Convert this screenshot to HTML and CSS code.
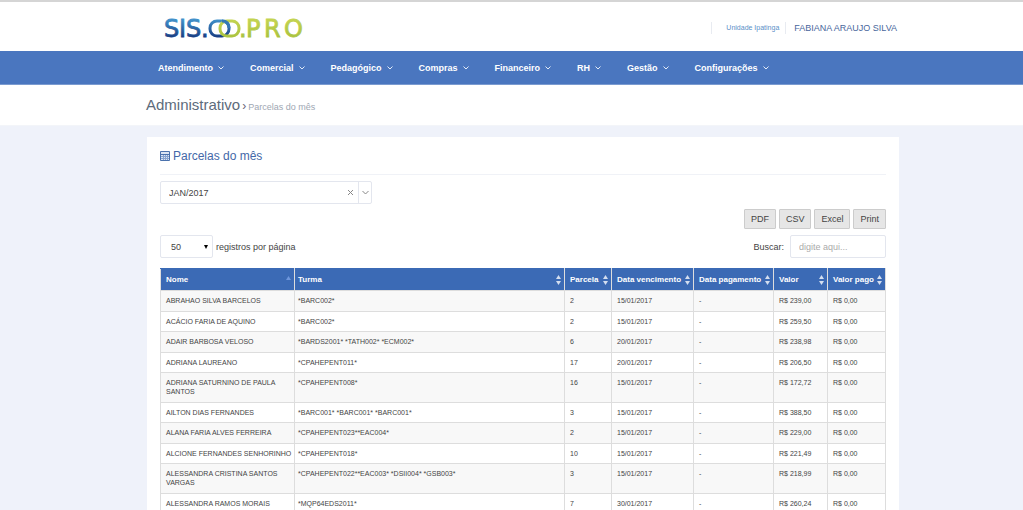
FILE: index.html
```html
<!DOCTYPE html>
<html lang="pt-BR">
<head>
<meta charset="utf-8">
<title>Parcelas do mês</title>
<link rel="stylesheet" href="styles.css">
</head>
<body>
<header class="top wrap">
  <svg class="logo" width="142" height="24" viewBox="0 0 142 24" role="img" aria-label="SIS.OO.PRO">
    <defs>
      <linearGradient id="blue" gradientUnits="userSpaceOnUse" x1="0" y1="3" x2="0" y2="21"><stop offset="0" stop-color="#3f8fc9"/><stop offset="1" stop-color="#173a80"/></linearGradient>
      <linearGradient id="green" gradientUnits="userSpaceOnUse" x1="0" y1="3" x2="0" y2="21"><stop offset="0" stop-color="#c3d350"/><stop offset="1" stop-color="#a9c23e"/></linearGradient>
    </defs>
    <g class="logo-text" fill="url(#blue)" stroke="url(#blue)"><text x="0" y="20">S</text><text x="15" y="20">I</text><text x="22" y="20">S</text><text x="37" y="20">.</text></g>
    <rect x="46" y="4" width="19" height="15" rx="7" fill="none" stroke="url(#blue)" stroke-width="3"/>
    <rect x="56" y="4" width="19" height="15" rx="7" fill="none" stroke="url(#green)" stroke-width="3"/>
    <path d="M58 4Q65 4 65 11" fill="none" stroke="#3478b5" stroke-width="3"/>
    <g class="logo-text" fill="url(#green)" stroke="url(#green)"><text x="75" y="20">.</text><text x="82" y="20">P</text><text x="100" y="20">R</text><text x="120" y="20">O</text></g>
  </svg>
  <div class="user"><a class="unit" href="#">Unidade Ipatinga</a><a class="name" href="#">FABIANA ARAUJO SILVA</a></div>
</header>
<nav class="nav wrap">
  <a href="#">Atendimento<svg class="chev" viewBox="0 0 6 4"><path d="M.5.5 3 3 5.500.5"/></svg></a>
  <a href="#">Comercial<svg class="chev" viewBox="0 0 6 4"><path d="M.5.5 3 3 5.500.5"/></svg></a>
  <a href="#">Pedagógico<svg class="chev" viewBox="0 0 6 4"><path d="M.5.5 3 3 5.500.5"/></svg></a>
  <a href="#">Compras<svg class="chev" viewBox="0 0 6 4"><path d="M.5.5 3 3 5.500.5"/></svg></a>
  <a href="#">Financeiro<svg class="chev" viewBox="0 0 6 4"><path d="M.5.5 3 3 5.500.5"/></svg></a>
  <a href="#">RH<svg class="chev" viewBox="0 0 6 4"><path d="M.5.5 3 3 5.500.5"/></svg></a>
  <a href="#">Gestão<svg class="chev" viewBox="0 0 6 4"><path d="M.5.5 3 3 5.500.5"/></svg></a>
  <a href="#">Configurações<svg class="chev" viewBox="0 0 6 4"><path d="M.5.5 3 3 5.500.5"/></svg></a>
</nav>
<div class="crumbs wrap"><h1>Administrativo</h1><span class="sep">›</span><small>Parcelas do mês</small></div>
<main class="wrap content">
  <section class="panel">
    <h2><svg width="10" height="10" viewBox="0 0 10 10"><path d="M.5.5h9v9h-9z" fill="#dbe5f4" stroke="#4b72ad"/><path d="M1 3.500h8" stroke="#4b72ad"/><path d="M1 5.500h8M1 7.500h8M3.500 4v5M5.500 4v5M7.500 4v5" stroke="#86a3d0"/></svg>Parcelas do mês</h2>
    <div class="combo">
      <input type="text" value="JAN/2017" aria-label="Mês">
      <button type="button" aria-label="Limpar"><svg width="7" height="7" viewBox="0 0 7 7"><path d="M1 1l5 5M6 1 1 6"/></svg></button>
      <button type="button" class="open" aria-label="Abrir"><svg width="7" height="5" viewBox="0 0 7 5"><path d="M.5 1l3 3 3-3"/></svg></button>
    </div>
    <div class="exports"><button type="button">PDF</button><button type="button">CSV</button><button type="button">Excel</button><button type="button">Print</button></div>
    <div class="tools">
      <label><span class="pick"><select><option>50</option></select><svg width="4" height="4" viewBox="0 0 4 4"><path d="M0 0h4L2 4z"/></svg></span>registros por página</label>
      <label class="search">Buscar:<input type="text" placeholder="digite aqui..."></label>
    </div>
    <table>
      <colgroup><col class="c-name"><col><col class="c-num"><col class="c-due"><col class="c-paid"><col class="c-val"><col class="c-sum"></colgroup>
      <thead><tr>
        <th><div>Nome<svg class="asc" width="5" height="10" viewBox="0 0 5 10"><path d="M0 5 2.500 1 5 5z"/></svg></div></th>
        <th><div>Turma<svg width="5" height="10" viewBox="0 0 5 10"><path d="M0 4 2.500 0 5 4zM0 6h5L2.500 10z"/></svg></div></th>
        <th><div>Parcela<svg width="5" height="10" viewBox="0 0 5 10"><path d="M0 4 2.500 0 5 4zM0 6h5L2.500 10z"/></svg></div></th>
        <th><div>Data vencimento<svg width="5" height="10" viewBox="0 0 5 10"><path d="M0 4 2.500 0 5 4zM0 6h5L2.500 10z"/></svg></div></th>
        <th><div>Data pagamento<svg width="5" height="10" viewBox="0 0 5 10"><path d="M0 4 2.500 0 5 4zM0 6h5L2.500 10z"/></svg></div></th>
        <th><div>Valor<svg width="5" height="10" viewBox="0 0 5 10"><path d="M0 4 2.500 0 5 4zM0 6h5L2.500 10z"/></svg></div></th>
        <th><div>Valor pago<svg width="5" height="10" viewBox="0 0 5 10"><path d="M0 4 2.500 0 5 4zM0 6h5L2.500 10z"/></svg></div></th>
      </tr></thead>
      <tbody>
        <tr><td>ABRAHAO SILVA BARCELOS</td><td>*BARC002*</td><td>2</td><td>15/01/2017</td><td>-</td><td>R$ 239,00</td><td>R$ 0,00</td></tr>
        <tr><td>ACÁCIO FARIA DE AQUINO</td><td>*BARC002*</td><td>2</td><td>15/01/2017</td><td>-</td><td>R$ 259,50</td><td>R$ 0,00</td></tr>
        <tr><td>ADAIR BARBOSA VELOSO</td><td>*BARDS2001* *TATH002* *ECM002*</td><td>6</td><td>20/01/2017</td><td>-</td><td>R$ 238,98</td><td>R$ 0,00</td></tr>
        <tr><td>ADRIANA LAUREANO</td><td>*CPAHEPENT011*</td><td>17</td><td>20/01/2017</td><td>-</td><td>R$ 206,50</td><td>R$ 0,00</td></tr>
        <tr><td>ADRIANA SATURNINO DE PAULA SANTOS</td><td>*CPAHEPENT008*</td><td>16</td><td>15/01/2017</td><td>-</td><td>R$ 172,72</td><td>R$ 0,00</td></tr>
        <tr><td>AILTON DIAS FERNANDES</td><td>*BARC001* *BARC001* *BARC001*</td><td>3</td><td>15/01/2017</td><td>-</td><td>R$ 388,50</td><td>R$ 0,00</td></tr>
        <tr><td>ALANA FARIA ALVES FERREIRA</td><td>*CPAHEPENT023**EAC004*</td><td>2</td><td>15/01/2017</td><td>-</td><td>R$ 229,00</td><td>R$ 0,00</td></tr>
        <tr><td>ALCIONE FERNANDES SENHORINHO</td><td>*CPAHEPENT018*</td><td>10</td><td>15/01/2017</td><td>-</td><td>R$ 221,49</td><td>R$ 0,00</td></tr>
        <tr><td>ALESSANDRA CRISTINA SANTOS VARGAS</td><td>*CPAHEPENT022**EAC003* *DSII004* *GSB003*</td><td>3</td><td>15/01/2017</td><td>-</td><td>R$ 218,99</td><td>R$ 0,00</td></tr>
        <tr><td>ALESSANDRA RAMOS MORAIS</td><td>*MQP64EDS2011*</td><td>7</td><td>30/01/2017</td><td>-</td><td>R$ 260,24</td><td>R$ 0,00</td></tr>
      </tbody>
    </table>
  </section>
</main>
</body>
</html>
```
FILE: styles.css
```css
* { box-sizing: border-box; }
body { margin: 0; background: #eff2fa; color: #444; font: 9px/14px "Liberation Sans", Arial, sans-serif; }
html { scrollbar-width: none; }
a { text-decoration: none; color: inherit; }
button, input, select { font: inherit; color: inherit; margin: 0; }
svg { flex: none; }
.wrap { padding-left: 146px; padding-right: 124px; }
.top { display: flex; align-items: center; justify-content: space-between; height: 51px; padding-top: 4px; background: #fff; border-top: 2px solid #d5d5d5; }
.logo { margin-left: 18px; overflow: visible; }
.logo-text { font: 24px "DejaVu Sans", sans-serif; stroke-width: 0.8; }
.user { display: flex; align-items: center; margin-bottom: 2px; }
.unit { border: 1px solid #e8ebf1; border-width: 0 1px; padding: 0 6px 0 14px; font-size: 7px; line-height: 12px; color: #5a8fc8; }
.name { margin-left: 8px; padding-right: 2px; color: #48669c; }
.nav { display: flex; height: 34px; align-items: center; background: #4a76bf; border-bottom: 1px solid #7b9bd0; color: #fff; font-weight: 700; }
.nav a { display: flex; align-items: center; gap: 5px; padding: 0 14px 0 12px; }
.chev { width: 6px; height: 4px; fill: none; stroke: #e3ebf7; }
.crumbs { display: flex; align-items: baseline; gap: 2px; height: 41px; padding-top: 11px; background: #fff; border-bottom: 1px solid #f3f5f9; }
h1 { margin: 0; font-size: 15px; line-height: 18px; font-weight: 400; color: #5d6b7b; }
.sep { color: #667; font-size: 12px; }
.crumbs small { font-size: 9px; color: #9ea7b3; }
.content { padding-top: 11px; }
.panel { padding: 11px 13px 20px; background: #fff; margin-left: 1px; }
h2 { display: flex; align-items: center; gap: 3px; margin: 0 0 6px; padding-bottom: 10px; border-bottom: 1px solid #f0f2f7; font-size: 12px; line-height: 16px; font-weight: 400; color: #4468a8; }
.combo { display: flex; width: 212px; height: 23px; border: 1px solid #e3e6ee; border-radius: 2px; }
.combo input { flex: 1; min-width: 0; border: 0; padding: 0 8px; background: none; }
.combo button { display: grid; place-items: center; width: 16px; padding: 0; border: 0; background: none; }
.combo .open { width: 13px; border-left: 1px solid #e3e6ee; }
.combo path { fill: none; stroke: #888; }
.exports { display: flex; justify-content: flex-end; gap: 3px; margin-top: 5px; }
.exports button { height: 20px; padding: 0 6px; border: 1px solid #ccc; border-radius: 1px; background: #e6e6e6; }
.tools { display: flex; justify-content: space-between; margin: 6px 0 10px; }
.tools label { display: flex; align-items: center; gap: 3px; }
.pick { display: flex; align-items: center; width: 53px; height: 23px; padding-right: 4px; border: 1px solid #e3e6ee; border-radius: 2px; }
.pick select { flex: 1; min-width: 0; border: 0; padding: 0 0 0 10px; appearance: none; background: none; }
.tools .search { gap: 6px; }
.search input { width: 96px; height: 23px; padding: 0 8px; border: 1px solid #e3e6ee; border-radius: 2px; }
.search input::placeholder { color: #aaa; }
table { width: 100%; table-layout: fixed; border-collapse: collapse; }
.c-name { width: 134px; }
.c-num { width: 47px; }
.c-due { width: 82px; }
.c-paid { width: 80px; }
.c-val { width: 54px; }
.c-sum { width: 58px; }
th, td { border: 1px solid #ddd; text-align: left; vertical-align: top; }
th { height: 22px; padding: 0 3px 0 5px; vertical-align: middle; background: #3b6ab5; color: #fff; font-size: 8px; line-height: 10px; white-space: nowrap; border-top-color: #3b6ab5; }
th div { display: flex; align-items: center; justify-content: space-between; }
th svg { fill: #d3def0; }
th .asc { fill: #6f97dc; }
td { padding: 5px 0 5px 5px; font-size: 7px; line-height: 9px; }
th:nth-child(2), td:nth-child(2) { padding-left: 3px; }
tbody tr:nth-child(odd) { background: #f8f8f8; }
tbody tr:nth-child(odd) td { padding-bottom: 6px; }
```
